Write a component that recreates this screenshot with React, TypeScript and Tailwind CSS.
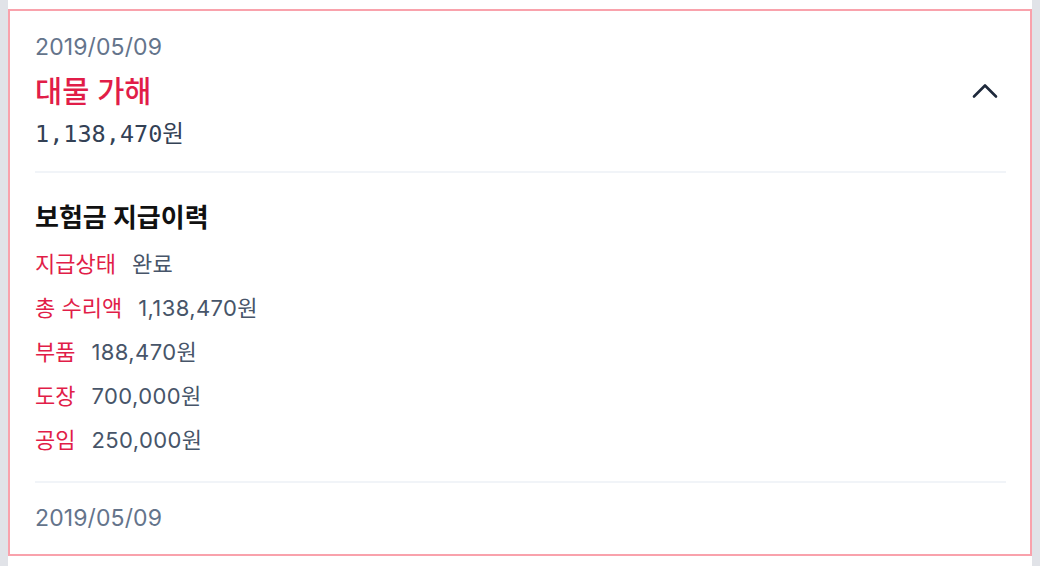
import { useState } from 'react'

interface PaymentRow {
  label: string
  value: string
}

const rows: PaymentRow[] = [
  { label: '지급상태', value: '완료' },
  { label: '총 수리액', value: '1,138,470원' },
  { label: '부품', value: '188,470원' },
  { label: '도장', value: '700,000원' },
  { label: '공임', value: '250,000원' },
]

const sans = "font-['Inter','Noto_Sans_CJK_KR',sans-serif]"

export default function App() {
  const [open, setOpen] = useState(true)

  return (
    <div className={`flex h-[566px] w-[1040px] bg-white ${sans}`}>
      <div className="w-2 shrink-0 bg-[#e1e3e8]" />
      <div className="flex-1 pt-[9px]">
        <div className="flex h-[547px] flex-col border-2 border-[#f9a2ac] bg-white pl-[25px] pr-[24px]">
          {/* Header */}
          <div className="flex items-center justify-between border-b-2 border-[#f1f4f8] pt-[21px] pb-[21px]">
            <div className="flex flex-col">
              <span className="text-[23px] leading-[30px] tracking-[0.1px] text-[#64748b]">2019/05/09</span>
              <span className="mt-[11px] text-[29.5px] font-medium leading-[36px] text-[#e11d48]">대물 가해</span>
              <span className="mt-[9px] font-['DejaVu_Sans_Mono','Noto_Sans_CJK_KR',monospace] text-[23.5px] leading-[32px] text-[#334155]">
                1,138,470원
              </span>
            </div>
            <button onClick={() => setOpen(!open)} className="mr-[8px] p-0">
              <svg width="26" height="16" viewBox="0 0 26 16" fill="none">
                <polyline
                  points={open ? '2,13.5 13,2.5 24,13.5' : '2,2.5 13,13.5 24,2.5'}
                  stroke="#1e293b"
                  strokeWidth="2.6"
                  strokeLinecap="round"
                  strokeLinejoin="round"
                />
              </svg>
            </button>
          </div>

          {/* Payment history */}
          <div className="border-b-2 border-[#f1f4f8] pt-[28px] pb-[25px]">
            <h3 className="text-[26px] font-bold leading-[34px] text-[#111111]">보험금 지급이력</h3>
            <div className="mt-[13px] flex flex-col gap-[12px]">
              {rows.map(r => (
                <div key={r.label} className="flex items-center text-[22px] leading-[32px]">
                  <span className="text-[#e11d48]">{r.label}</span>
                  <span className="ml-[16px] tracking-[0.4px] text-[#475569]">{r.value}</span>
                </div>
              ))}
            </div>
          </div>

          <div className="pt-[20px]">
            <span className="text-[23px] leading-[30px] tracking-[0.1px] text-[#64748b]">2019/05/09</span>
          </div>
        </div>
      </div>
      <div className="w-2 shrink-0 bg-[#e1e3e8]" />
    </div>
  )
}
